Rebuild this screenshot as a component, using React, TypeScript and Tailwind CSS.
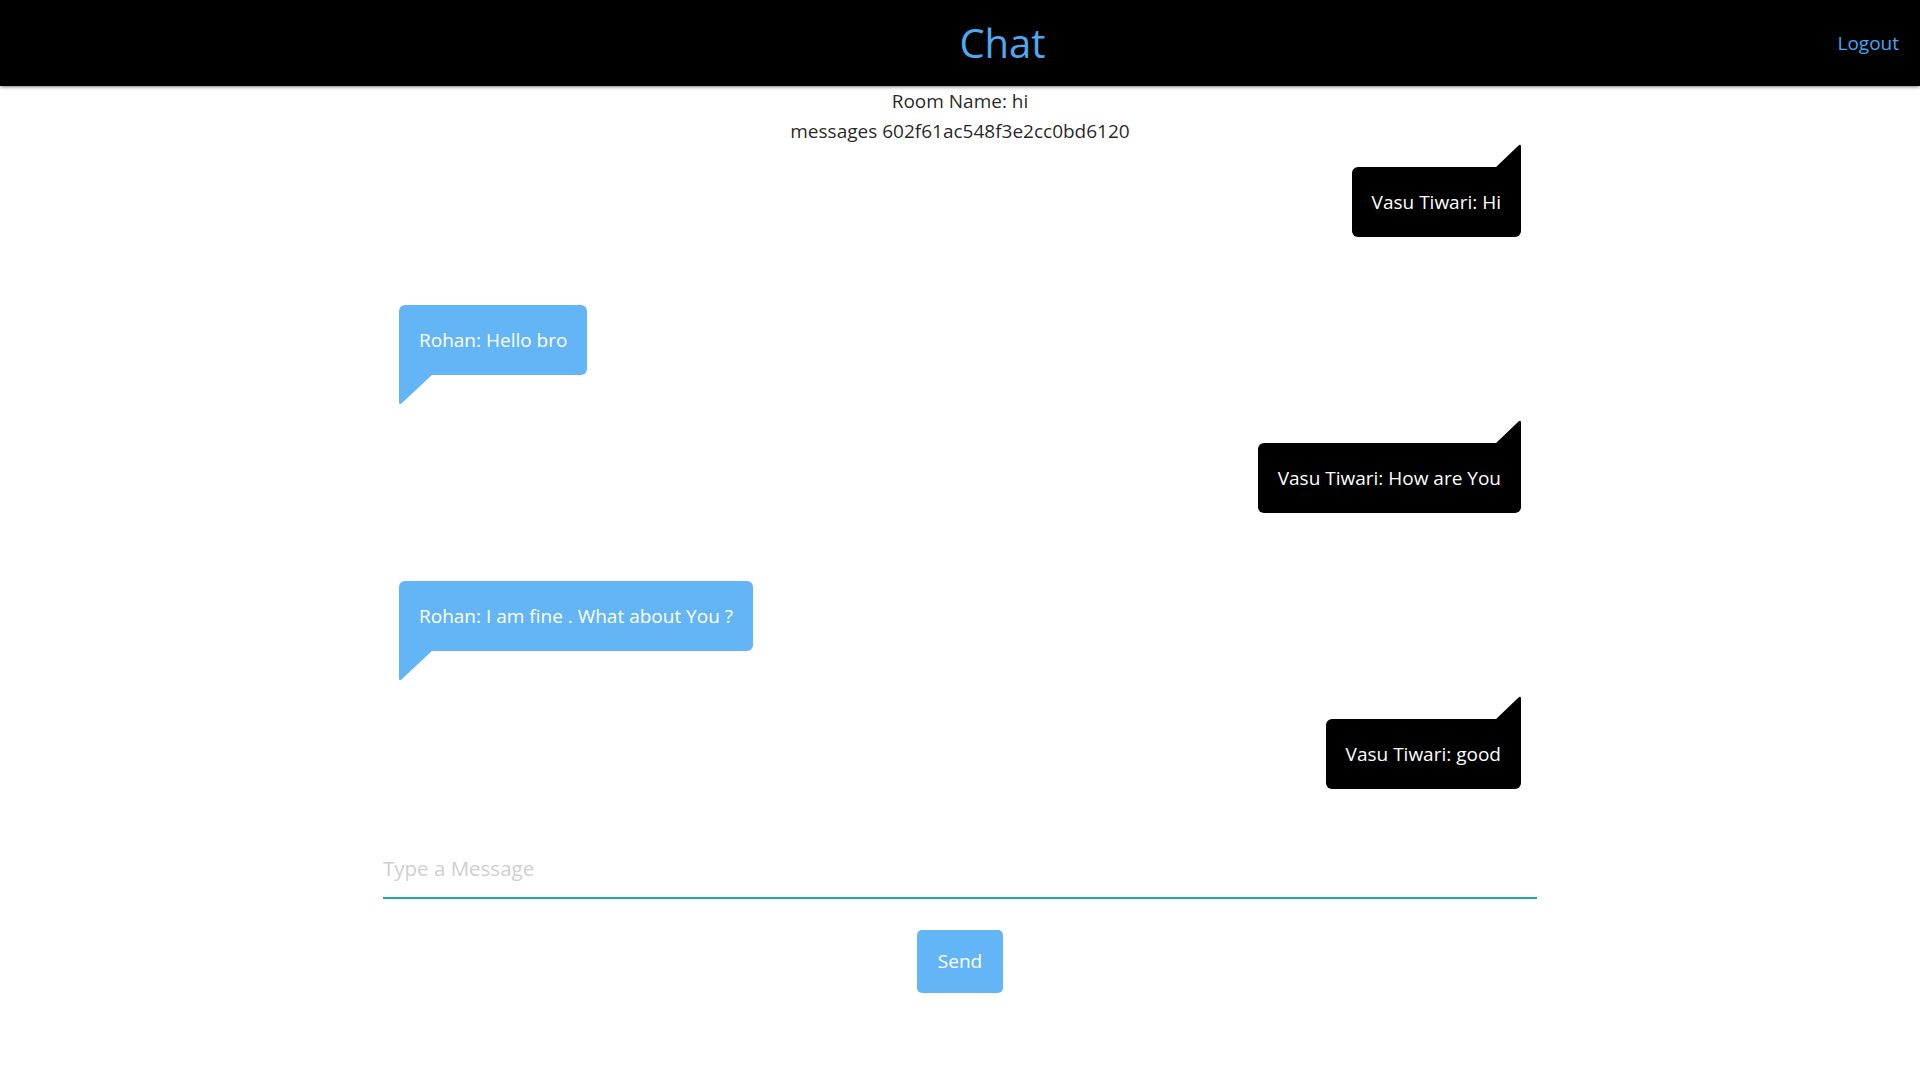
import React from "react";

interface IMessage {
    name: string;
    text: string;
    mine: boolean;
}

const messages: IMessage[] = [
    { name: "Vasu Tiwari", text: "Hi", mine: true },
    { name: "Rohan", text: "Hello bro", mine: false },
    { name: "Vasu Tiwari", text: "How are You", mine: true },
    { name: "Rohan", text: "I am fine . What about You ?", mine: false },
    { name: "Vasu Tiwari", text: "good", mine: true },
];

function Bubble({ name, text, mine }: IMessage) {
    if (mine) {
        return (
            <div className="flex justify-end">
                <div className="relative bg-black text-white rounded-[6px] rounded-tr-none px-5 py-5 leading-[30px] text-[19px]">
                    <svg
                        className="absolute right-0 -top-[23px]"
                        width="26"
                        height="24"
                        viewBox="0 0 26 24"
                    >
                        <path d="M0 24 L23 2 Q26 -1 26 3 L26 24 Z" fill="#000" />
                    </svg>
                    {name}: {text}
                </div>
            </div>
        );
    }
    return (
        <div className="flex justify-start">
            <div className="relative bg-[#64b5f6] text-white rounded-[6px] rounded-bl-none px-5 py-5 leading-[30px] text-[19px]">
                <svg
                    className="absolute left-0 -bottom-[30px]"
                    width="34"
                    height="31"
                    viewBox="0 0 34 31"
                >
                    <path d="M0 0 L34 0 L3 29 Q0 32 0 28 Z" fill="#64b5f6" />
                </svg>
                {name}: {text}
            </div>
        </div>
    );
}

function App() {
    return (
        <div
            className="min-h-screen bg-white text-[rgba(0,0,0,0.87)]"
            style={{ fontFamily: '"Open Sans", "Noto Sans", sans-serif' }}
        >
            <nav className="h-[86px] bg-black flex items-center shadow-[0_2px_2px_0_rgba(0,0,0,0.14),0_3px_1px_-2px_rgba(0,0,0,0.12),0_1px_5px_0_rgba(0,0,0,0.2)]">
                <div className="flex-1" />
                <div className="ml-[106px] text-[40px] leading-none text-[#4ea8f2] pb-[1px]">
                    Chat
                </div>
                <div className="flex-1 flex justify-end pr-[21px]">
                    <a className="text-[19px] text-[#42a5f5] cursor-pointer">Logout</a>
                </div>
            </nav>

            <div className="text-center text-[19px] leading-[30px]">
                <div>Room Name: hi</div>
                <div>messages 602f61ac548f3e2cc0bd6120</div>
            </div>

            <div className="w-[1154px] mx-auto">
                <div className="flex flex-col gap-[68px] pt-[21px] px-4">
                    {messages.map((m, i) => (
                        <Bubble key={i} {...m} />
                    ))}
                </div>

                <div className="mt-[50px]">
                    <input
                        autoFocus
                        placeholder="Type a Message"
                        className="w-full h-[60px] text-[20.5px] outline-none border-b-2 border-[#26a69a] placeholder:text-[#cfcfcf] bg-transparent caret-black"
                    />
                </div>

                <div className="flex justify-center mt-[31px]">
                    <button className="w-[86px] h-[63px] bg-[#64b5f6] text-white text-[19px] rounded-[5px]">
                        Send
                    </button>
                </div>
            </div>
        </div>
    );
}

export default App;
